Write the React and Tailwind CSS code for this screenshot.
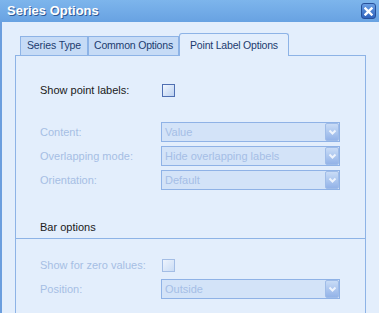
import React from "react";

function Chevron() {
  return (
    <svg width="9" height="7" viewBox="0 0 9 7">
      <path d="M1.5 1.5 L4.5 4.5 L7.5 1.5" fill="none" stroke="#eef4fd" strokeWidth="2" />
    </svg>
  );
}

function Select({ value }) {
  return (
    <div className="flex h-[20px] w-[179px] items-center border border-[#8fb2e6] bg-[#d3e3f8] pl-[3px]">
      <span className="flex-1 text-[11px] leading-none text-[#a5bee6]">{value}</span>
      <div className="flex h-[18px] w-[14px] items-center justify-center rounded-[2px] border border-[#9fbce8] bg-gradient-to-b from-[#c9dcf6] to-[#93b3e8]">
        <Chevron />
      </div>
    </div>
  );
}

function Check({ enabled }) {
  return (
    <div
      className={
        enabled
          ? "h-[13px] w-[13px] border border-[#4f6fb2] bg-gradient-to-br from-[#f2f7fe] to-[#bcd1f0]"
          : "h-[13px] w-[13px] border border-[#a3bde5] bg-gradient-to-br from-[#eef4fd] to-[#cadcf5]"
      }
    />
  );
}

function Row({ label, children }) {
  return (
    <div className="flex h-[20px] items-center">
      <span className="w-[121px] text-[11px] leading-none text-[#a6bee4]">{label}</span>
      {children}
    </div>
  );
}

export default function App() {
  return (
    <div className="flex h-[313px] w-[379px] flex-col overflow-hidden bg-[#e3eefc] font-['Liberation_Sans',Arial,sans-serif]">
      <div className="flex h-[22px] items-center justify-between bg-gradient-to-b from-[#7db5ec] to-[#68a2e2] pl-[7px] pr-[3px]">
        <span className="text-[13px] font-bold text-white [text-shadow:1px_1px_0_#2f5a95]">Series Options</span>
        <div className="flex h-[16px] w-[15px] items-center justify-center rounded-[3px] border border-[#27509a] bg-gradient-to-b from-[#6b9fe4] to-[#2f63bd]">
          <svg width="9" height="9" viewBox="0 0 9 9">
            <path d="M1.5 1.5 L7.5 7.5 M7.5 1.5 L1.5 7.5" stroke="#ffffff" strokeWidth="2.4" strokeLinecap="square" />
          </svg>
        </div>
      </div>
      <div className="flex flex-1 flex-col border-l-2 border-[#6b9ede] pl-[13px] pt-[11px]">
        <div className="flex h-[22px] w-[351px] items-end pl-[5px]">
          <div className="flex h-[19px] w-[68px] items-center justify-center whitespace-nowrap border-l border-r border-t border-[#8db3e6] bg-[#c6dbf6] text-[10.5px] tracking-[-0.1px] text-[#1c3b6f]">
            Series Type
          </div>
          <div className="flex h-[19px] w-[91px] items-center justify-center whitespace-nowrap border-l border-r border-t border-[#8db3e6] bg-[#c6dbf6] text-[10.5px] tracking-[-0.2px] text-[#1c3b6f]">
            Common Options
          </div>
          <div className="relative z-10 -mb-px flex h-[23px] w-[110px] items-center justify-center whitespace-nowrap rounded-t-[3px] border-l border-r border-t border-[#8db3e6] bg-[#e3eefc] pt-[1px] text-[10.5px] tracking-[-0.2px] text-[#1c3b6f]">
            Point Label Options
          </div>
        </div>
        <div className="flex w-[351px] flex-1 flex-col border-l border-r border-t border-[#8db3e6]">
          <div className="px-[24px] pt-[28px]">
            <div className="flex h-[13px] items-center">
              <span className="w-[122px] text-[11px] leading-none text-[#1a1a1a]">Show point labels:</span>
              <Check enabled />
            </div>
            <div className="mt-[25px] flex flex-col gap-[4px]">
              <Row label="Content:">
                <Select value="Value" />
              </Row>
              <Row label="Overlapping mode:">
                <Select value="Hide overlapping labels" />
              </Row>
              <Row label="Orientation:">
                <Select value="Default" />
              </Row>
            </div>
          </div>
          <div className="flex h-[49px] items-end border-b border-[#8db3e6] pb-[4px] pl-[24px]">
            <span className="text-[11px] leading-[14px] text-[#1a1a1a]">Bar options</span>
          </div>
          <div className="px-[24px] pt-[20px]">
            <div className="flex h-[13px] items-center">
              <span className="w-[122px] text-[11px] leading-none text-[#a6bee4]">Show for zero values:</span>
              <Check />
            </div>
            <div className="mt-[7px]">
              <Row label="Position:">
                <Select value="Outside" />
              </Row>
            </div>
          </div>
        </div>
      </div>
    </div>
  );
}
